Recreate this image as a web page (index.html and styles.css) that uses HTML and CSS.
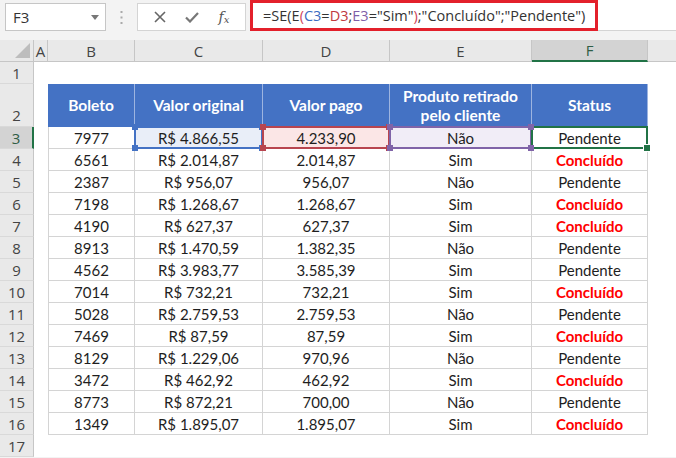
FILE: index.html
```html
<!DOCTYPE html>
<html lang="pt-BR">
<head>
    <meta charset="UTF-8">
    <title>Planilha - Boletos</title>
    <link rel="stylesheet" href="styles.css">
</head>
<body>

<div class="formula-bar">
    <div class="name-box">
        <span>F3</span>
        <svg class="caret" width="8" height="5" viewBox="0 0 8 5"><path d="M0 0h8L4 5z" fill="#777"/></svg>
    </div>
    <div class="grip">
        <svg width="3" height="13" viewBox="0 0 3 13"><rect x="0.5" y="0" width="2" height="2" fill="#aaa"/><rect x="0.5" y="5.5" width="2" height="2" fill="#aaa"/><rect x="0.5" y="11" width="2" height="2" fill="#aaa"/></svg>
    </div>
    <div class="fx-buttons">
        <svg class="btn-icon" width="12" height="12" viewBox="0 0 12 12"><path d="M1 1l10 10M11 1L1 11" stroke="#666" stroke-width="1.6"/></svg>
        <svg class="btn-icon" width="14" height="11" viewBox="0 0 14 11"><path d="M1 5.5l4 4L13 1" stroke="#777" stroke-width="2.2" fill="none"/></svg>
        <span class="fx">f<sub>x</sub></span>
    </div>
    <div class="formula-input">
        <div class="formula">=SE(E<span class="paren">(</span><span class="ref-blue">C3</span>=<span class="ref-red">D3</span>;<span class="ref-purple">E3</span>="Sim"<span class="paren">)</span>;"Concluído";"Pendente")</div>
    </div>
</div>

<div class="sheet" id="sheet">
    <!-- cells are generated below -->
</div>

<script>
    const columns = ["A", "B", "C", "D", "E", "F"];
    const headers = ["Boleto", "Valor original", "Valor pago", "Produto retirado pelo cliente", "Status"];

    const boletos = [
        ["7977", "R$ 4.866,55", "4.233,90", "Não", "Pendente"],
        ["6561", "R$ 2.014,87", "2.014,87", "Sim", "Concluído"],
        ["2387", "R$ 956,07", "956,07", "Não", "Pendente"],
        ["7198", "R$ 1.268,67", "1.268,67", "Sim", "Concluído"],
        ["4190", "R$ 627,37", "627,37", "Sim", "Concluído"],
        ["8913", "R$ 1.470,59", "1.382,35", "Não", "Pendente"],
        ["4562", "R$ 3.983,77", "3.585,39", "Sim", "Pendente"],
        ["7014", "R$ 732,21", "732,21", "Sim", "Concluído"],
        ["5028", "R$ 2.759,53", "2.759,53", "Não", "Pendente"],
        ["7469", "R$ 87,59", "87,59", "Sim", "Concluído"],
        ["8129", "R$ 1.229,06", "970,96", "Não", "Pendente"],
        ["3472", "R$ 462,92", "462,92", "Sim", "Concluído"],
        ["8773", "R$ 872,21", "700,00", "Não", "Pendente"],
        ["1349", "R$ 1.895,07", "1.895,07", "Sim", "Concluído"]
    ];

    // ranges referenced by the formula in F3
    const refs = { "C3": "ref-c", "D3": "ref-d", "E3": "ref-e" };

    const sheet = document.getElementById("sheet");

    function addCell(className, text) {
        const cell = document.createElement("div");
        cell.className = "cell " + className;
        if (text) cell.innerHTML = text;
        sheet.appendChild(cell);
        return cell;
    }

    function addHandles(cell) {
        ["tl", "tr", "bl", "br"].forEach(pos => {
            const h = document.createElement("i");
            h.className = "handle " + pos;
            cell.appendChild(h);
        });
    }

    // column headers
    addCell("corner", '<svg width="15" height="15" viewBox="0 0 15 15"><path d="M15 0v15H0z" fill="#bdbdbd"/></svg>');
    columns.forEach(col => {
        addCell("col-head" + (col === "F" ? " selected" : ""), col);
    });
    addCell("col-head rest", "");

    // row 1 is blank
    addCell("row-head", "1");
    for (let i = 0; i < 7; i++) addCell("blank", "");

    // row 2 holds the table header
    addCell("row-head tall", "2");
    addCell("blank", "");
    headers.forEach(h => addCell("th", h));
    addCell("blank", "");

    boletos.forEach((row, i) => {
        const n = i + 3;
        addCell("row-head" + (n === 3 ? " selected" : ""), n);
        addCell("blank", "");
        row.forEach((value, j) => {
            const name = columns[j + 1] + n;
            let cls = "td" + (j === 0 ? " first" : "");
            if (j === 4 && value === "Concluído") cls += " done";
            if (refs[name]) cls += " ref " + refs[name];
            if (name === "F3") cls += " active";
            const cell = addCell(cls, value);
            if (refs[name]) addHandles(cell);
            if (name === "F3") {
                const fill = document.createElement("i");
                fill.className = "fill-handle";
                cell.appendChild(fill);
            }
        });
        addCell("blank", "");
    });

    addCell("row-head", "17");
    for (let i = 0; i < 7; i++) addCell("blank", "");
</script>

</body>
</html>
```

FILE: styles.css
```css
body {
    margin: 0;
    background-color: #f3f3f3;
    font-family: "Open Sans", sans-serif;
    color: #222;
    overflow: hidden;
}

/* formula bar */
.formula-bar {
    display: flex;
    height: 31px;
    padding-bottom: 9px;
}
.name-box {
    display: flex;
    align-items: center;
    justify-content: space-between;
    box-sizing: border-box;
    width: 101px;
    height: 28px;
    margin: 3px 0 0 5px;
    padding: 0 6px 0 7px;
    background-color: #fff;
    border: 1px solid #c6c6c6;
    font-size: 15px;
    color: #333;
}
.grip {
    width: 31px;
    display: flex;
    align-items: center;
    justify-content: center;
    padding-top: 3px;
}
.fx-buttons {
    display: flex;
    align-items: center;
    justify-content: space-around;
    box-sizing: border-box;
    width: 109px;
    height: 28px;
    margin-top: 3px;
    padding: 0 6px;
    background-color: #fff;
    border: 1px solid #d4d4d4;
}
.fx {
    font-family: "DejaVu Serif", serif;
    font-style: italic;
    font-size: 14px;
    color: #555;
}
.fx sub {
    font-size: 10px;
    vertical-align: -1px;
}
.formula-input {
    flex: 1;
    margin-left: 4px;
    margin-top: 0;
    background-color: #fff;
    border-bottom: 1px solid #d4d4d4;
}
.formula {
    box-sizing: border-box;
    width: 348px;
    height: 31px;
    padding: 0 0 0 10px;
    border: 3px solid #e3202b;
    font-size: 14.5px;
    line-height: 25px;
    color: #333;
    white-space: nowrap;
}
.ref-blue { color: #3a6cc1; }
.ref-red { color: #c0393e; }
.ref-purple { color: #7f5fa8; }
.paren { color: #d0455a; }

/* worksheet */
.sheet {
    display: grid;
    grid-template-columns: 34px 14px 87px 128px 127px 142px 116px 1fr;
    grid-template-rows: 22px 22px 43px repeat(15, 22px);
    background-color: #fff;
    font-family: "Lato", sans-serif;
    font-size: 15px;
}
.cell {
    position: relative;
    box-sizing: border-box;
    display: flex;
    align-items: center;
    justify-content: center;
    white-space: nowrap;
    padding-top: 1px;
}
.corner {
    background-color: #e9e9e9;
    border-right: 1px solid #c6c6c6;
    border-bottom: 1px solid #c6c6c6;
    align-items: flex-end;
    justify-content: flex-end;
    padding: 0 3px 3px 0;
}
.col-head {
    background-color: #e9e9e9;
    border-right: 1px solid #c6c6c6;
    border-bottom: 1px solid #c6c6c6;
    font-family: "Open Sans", sans-serif;
    font-size: 15px;
    color: #444;
    padding-top: 0;
}
.col-head.rest {
    border-right: none;
}
.col-head.selected {
    background-color: #d3d3d3;
    border-bottom: 2px solid #217346;
    color: #2f5d45;
}
.row-head {
    background-color: #e9e9e9;
    border-right: 1px solid #c6c6c6;
    border-bottom: 1px solid #d9d9d9;
    font-family: "Open Sans", sans-serif;
    font-size: 15px;
    color: #444;
    padding-top: 0;
}
.row-head.tall {
    align-items: flex-end;
    padding-bottom: 1px;
}
.row-head.selected {
    background-color: #d3d3d3;
    border-right: 2px solid #217346;
    color: #2f5d45;
}
.th {
    background-color: #4472c4;
    border-right: 1px solid #9db4e0;
    color: #fff;
    font-weight: bold;
    font-size: 15.5px;
    white-space: normal;
    text-align: center;
    line-height: 19px;
    padding: 0 6px;
}
.td {
    border-right: 1px solid #d4d4d4;
    border-bottom: 1px solid #d4d4d4;
    color: #1e1e1e;
}
.td.first {
    border-left: 1px solid #d4d4d4;
}
.td.done {
    color: #f00;
    font-weight: bold;
}

/* formula reference ranges */
.ref::after {
    content: "";
    position: absolute;
    top: -1px;
    left: -1px;
    right: -1px;
    bottom: -1px;
    border: 2px solid var(--ref);
}
.ref-c { --ref: #4472c4; background-color: #e9eef8; }
.ref-d { --ref: #b8454f; background-color: #fbe6e6; }
.ref-e { --ref: #8064a8; background-color: #f1edf7; }
.handle {
    position: absolute;
    z-index: 2;
    width: 6px;
    height: 6px;
    background-color: var(--ref);
}
.handle.tl { top: -3px; left: -3px; }
.handle.tr { top: -3px; right: -3px; }
.handle.bl { bottom: -3px; left: -3px; }
.handle.br { bottom: -3px; right: -3px; }

.active::after {
    content: "";
    position: absolute;
    top: -1px;
    left: -1px;
    right: -1px;
    bottom: -1px;
    border: 2px solid #217346;
}
.fill-handle {
    position: absolute;
    z-index: 3;
    right: -4px;
    bottom: -4px;
    width: 6px;
    height: 6px;
    background-color: #217346;
    border: 1px solid #fff;
}
```
